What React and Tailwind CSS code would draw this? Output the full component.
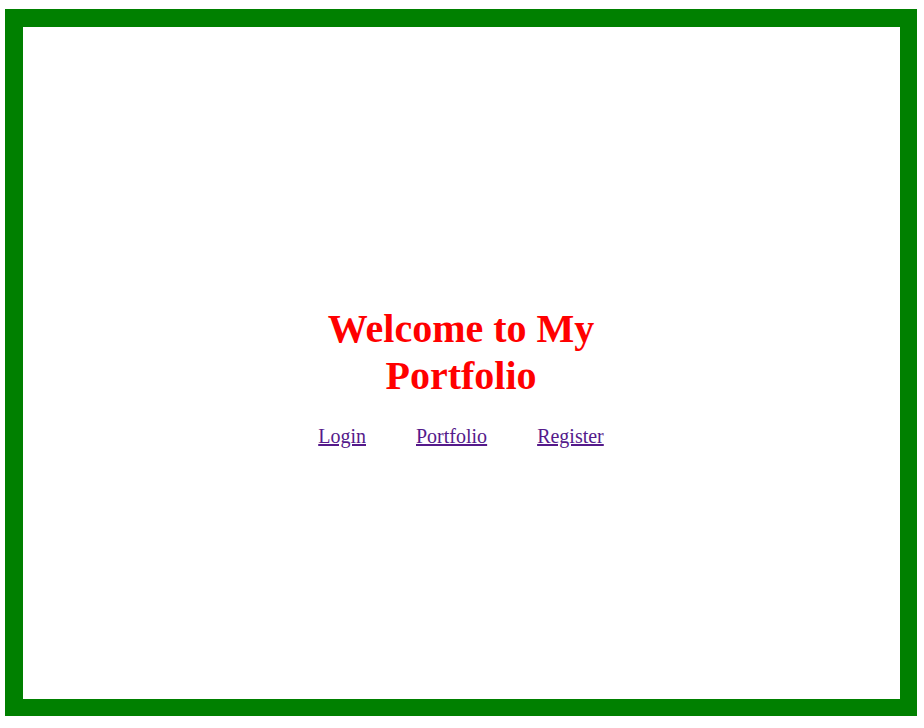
import React from 'react'

const links = ['Login', 'Portfolio', 'Register'];

const App = () => {
  return (
    <div className="w-[924px] h-[728px] bg-white pt-[9px] pl-[5px]" style={{ fontFamily: '"Liberation Serif", "Times New Roman", serif' }}>
      <div className="w-[912px] h-[707px] border-t-[18px] border-l-[18px] border-r-[17px] border-b-[17px] border-[#008000] bg-white flex flex-col items-center justify-center pt-[27px] pr-[1px]">
        <h1 className="w-[300px] text-center text-[40px] leading-[47px] font-bold text-[#ff0000] mb-[26px]">
          Welcome to My Portfolio
        </h1>
        <nav className="flex items-center gap-[50px] text-[20px] leading-[23px]">
          {links.map((link) => (
            <a key={link} href="#" className="text-[#551a8b] underline">{link}</a>
          ))}
        </nav>
      </div>
    </div>
  );
};

export default App
